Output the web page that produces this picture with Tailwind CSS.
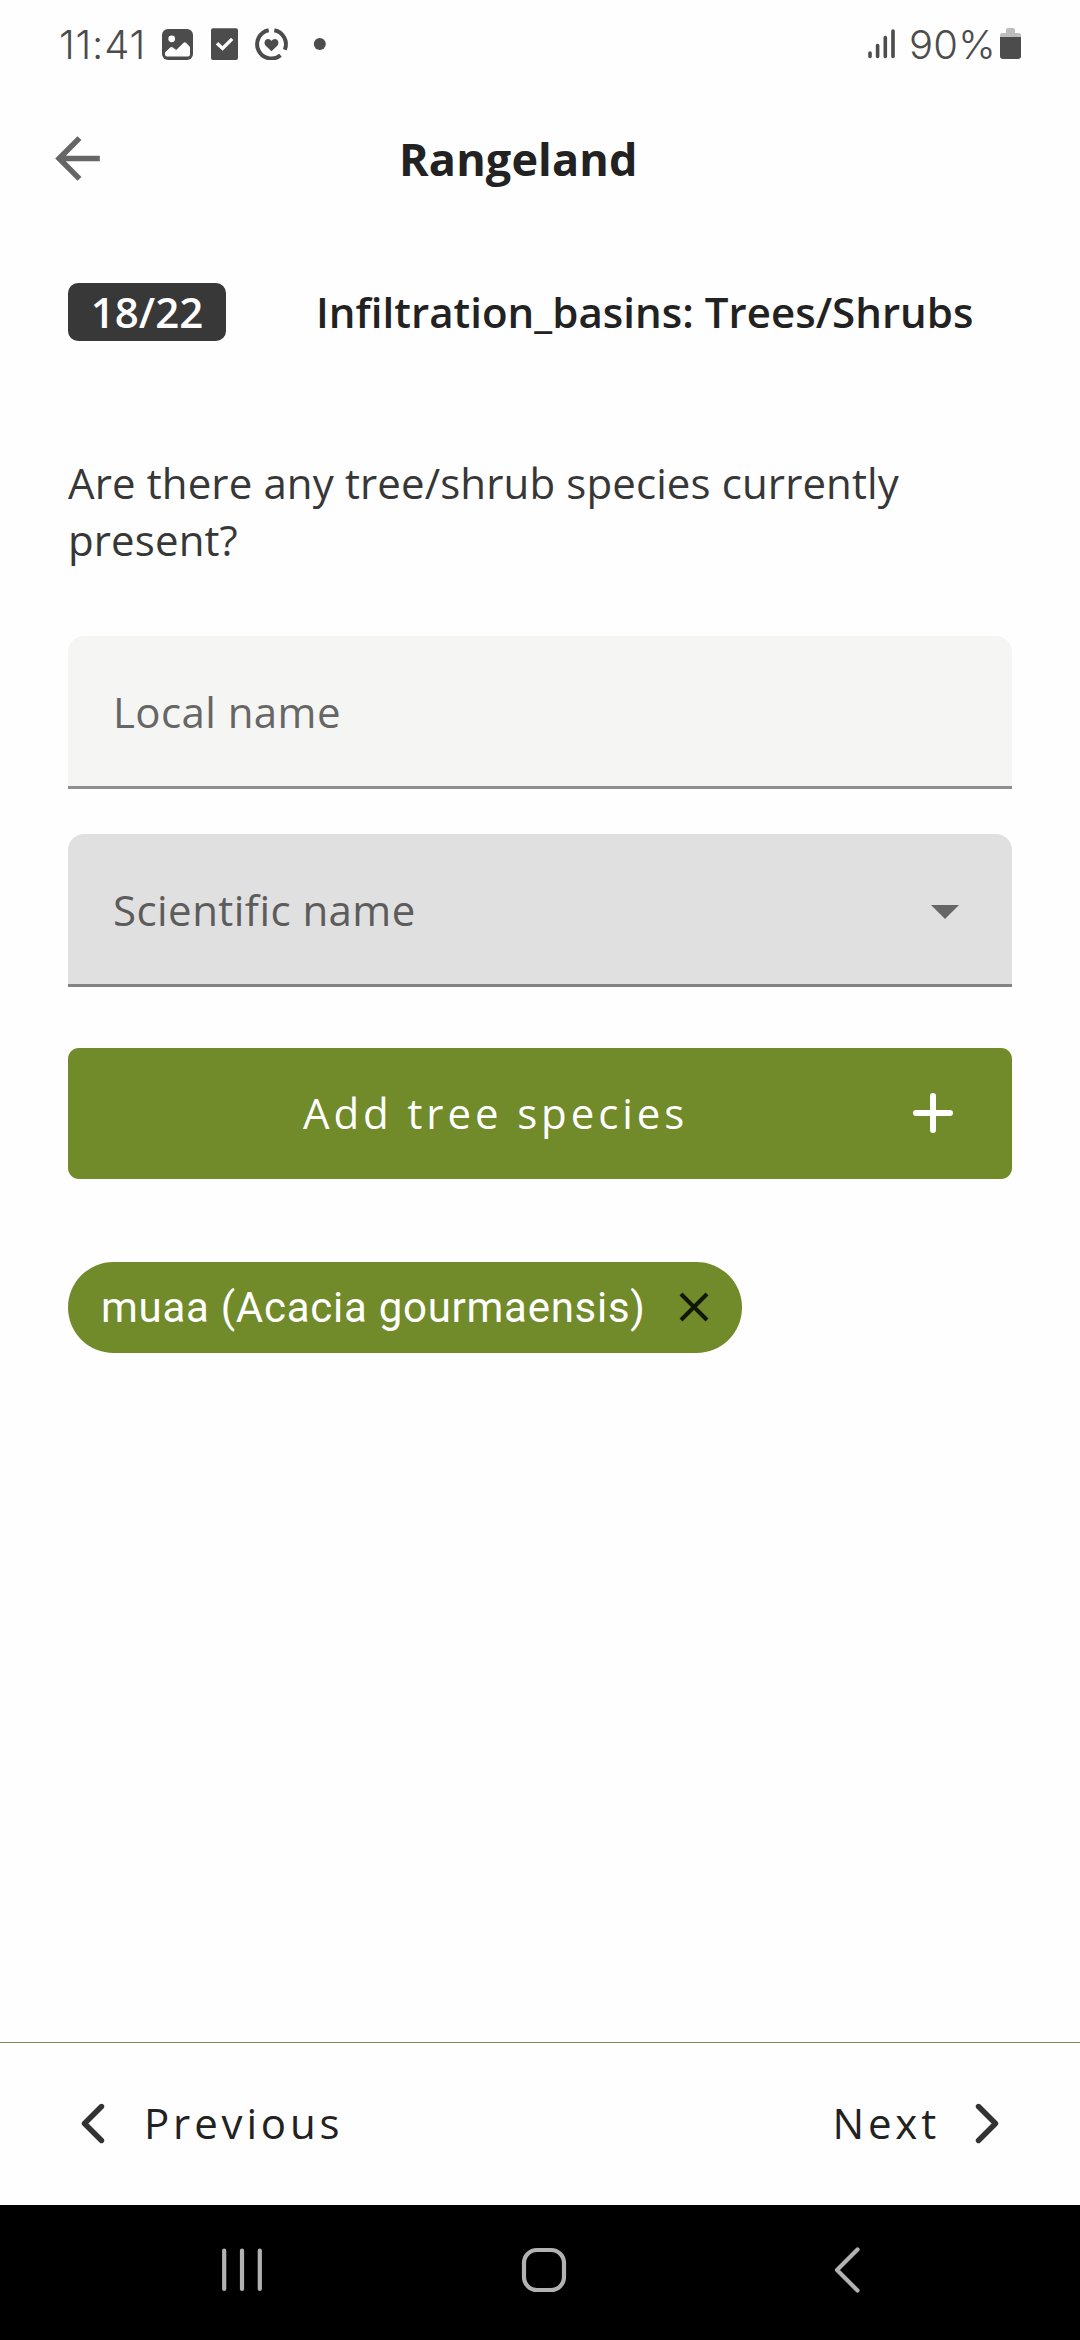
<!DOCTYPE html>
<html lang="en">
<head>
<meta charset="utf-8">
<title>Rangeland</title>
<script src="https://cdn.jsdelivr.net/npm/@tailwindcss/browser@4"></script>
</head>
<body class="bg-white">
<div class="flex h-[2340px] w-[1080px] flex-col overflow-hidden bg-[#fefefe] font-['Open_Sans',sans-serif] text-[42px] leading-[57px] text-[#222222]">

  <!-- Status bar -->
  <div class="flex h-[88px] items-center justify-between pr-[58px] pl-[59px] font-['Inter',sans-serif] text-[40px] font-[350] text-[#4c4c4c]">
    <div class="flex h-full items-center">
      <span class="w-[103px] tracking-[0.8px]">11:41</span>
      <svg class="h-8 w-[170px]" viewBox="162 28 170 32" fill="#4c4c4c">
        <rect x="162" y="29" width="31" height="31" rx="6"/>
        <circle cx="171.7" cy="38.8" r="3.4" fill="#fefefe"/>
        <path d="M165 52.5l5.2-5q1.400-1.200 2.800 0l3.200 2.500 7.400-7.200q1.200-1 2.400 0L190 47v7.500q0 2-2 2h-21q-2 0-2-2z" fill="#fefefe"/>
        <rect x="211" y="28.300" width="27" height="31.700" rx="2"/>
        <path d="M217 43.300l5.600 5.200 9.600-9.600" fill="none" stroke="#fefefe" stroke-width="3.400"/>
        <g fill="none" stroke="#4c4c4c" stroke-width="4">
          <path d="M268.700 30.200A14.300 14.300 0 1 0 280.500 55.300"/>
          <path d="M274.300 30.200A14.300 14.300 0 0 1 284.800 49.800"/>
        </g>
        <path d="M271.500 51.200l-5.800-5.500c-2.200-2.300-1-6.700 2.200-6.700 1.600 0 2.900.8 3.600 2 .7-1.200 2-2 3.600-2 3.200 0 4.400 4.400 2.200 6.700z"/>
        <circle cx="319.800" cy="44" r="6"/>
      </svg>
    </div>
    <div class="flex h-full items-center">
      <svg class="mr-[14px] h-8 w-[27px]" viewBox="868 28 27 32" fill="none" stroke="#4c4c4c" stroke-width="3.600" stroke-linecap="round">
        <path d="M870 53v3.500M877.600 45.500v11M885.300 37.500v19M893 31v25.500"/>
      </svg>
      <span class="w-[91px] tracking-[0.2px]">90%</span>
      <svg class="h-8 w-[22px]" viewBox="1000 28 22 32">
        <path d="M1006 33v-3q0-2 2-2h5q2 0 2 2v3h3.500q2.500 0 2.500 2.500V38h-21v-2.500q0-2.500 2.500-2.500z" fill="#bdbdbd"/>
        <path d="M1000 37h21v19q0 3-3 3h-15q-3 0-3-3z" fill="#4c4c4c"/>
      </svg>
    </div>
  </div>

  <!-- App bar -->
  <div class="flex h-[141px] items-center pl-11">
    <svg class="size-[67px]" viewBox="0 0 24 24" fill="#666666"><path d="M20 11H7.830l5.590-5.590L12 4l-8 8 8 8 1.410-1.410L7.830 13H20z"/></svg>
    <h1 class="ml-[288px] text-[45px] leading-[61px] font-bold tracking-[0.13px]">Rangeland</h1>
  </div>

  <main class="flex flex-1 flex-col px-[68px] pt-[54px]">
    <div class="flex h-[58px] items-center font-semibold">
      <div class="flex h-[58px] w-[158px] items-center justify-center rounded-[10px] bg-[#383838] pb-[2px] text-white">18/22</div>
      <h2 class="ml-[90px] pb-[2px] tracking-[0.04px] whitespace-nowrap">Infiltration_basins: Trees/Shrubs</h2>
    </div>

    <p class="mt-[113px] tracking-[0.120px] text-[#373737]">Are there any tree/shrub species currently<br>present?</p>

    <div class="mt-[68px] flex h-[153px] items-center rounded-t-[16px] border-b-3 border-[#8e8e8e] bg-[#f5f5f3] px-[45px] tracking-[0.42px] text-[#666666]">Local name</div>

    <div class="mt-[45px] flex h-[153px] items-center justify-between rounded-t-[16px] border-b-3 border-[#828282] bg-[#e0e0e0] pr-[53px] pl-[45px] tracking-[0.45px] text-[#5c5c5c]">
      <span>Scientific name</span>
      <svg class="mt-[6px] h-[14px] w-7" viewBox="0 0 28 14" fill="#666666"><path d="M0 0h28L14 14z"/></svg>
    </div>

    <button class="mt-[61px] flex h-[131px] items-center rounded-[11px] bg-[#718a2a] pr-[59px] pl-[235px] text-white">
      <span class="pb-[2px] tracking-[3.900px]">Add tree species</span>
      <svg class="mb-[2px] ml-auto size-10" viewBox="0 0 40 40" fill="none" stroke="#fff" stroke-width="6" stroke-linecap="round"><path d="M3 20h34M20 3v34"/></svg>
    </button>

    <div class="mt-[83px] flex h-[91px] w-[674px] items-center justify-between rounded-full bg-[#718a2a] pr-[33px] pl-[33px] font-['Roboto',sans-serif] text-white">
      <span class="tracking-[0.730px]">muaa (Acacia gourmaensis)</span>
      <svg class="mb-px size-[30px]" viewBox="0 0 30 30" fill="none" stroke="#121800" stroke-width="4"><path d="M2 2l26 26M28 2L2 28"/></svg>
    </div>
  </main>

  <!-- Pager -->
  <footer class="flex h-[163px] items-center justify-between border-t border-[#7b8a55] px-[81px] tracking-[3.850px]">
    <div class="flex items-center">
      <svg class="h-[42px] w-6" viewBox="0 0 24 42" fill="none" stroke="#333333" stroke-width="5.400" stroke-linecap="round" stroke-linejoin="round"><path d="M20.500 3.500L3.500 20.500l17 17"/></svg>
      <span class="ml-[39px] pb-[3px]">Previous</span>
    </div>
    <div class="flex items-center">
      <span class="mr-[35px] pb-[3px]">Next</span>
      <svg class="h-[42px] w-6" viewBox="0 0 24 42" fill="none" stroke="#333333" stroke-width="5.400" stroke-linecap="round" stroke-linejoin="round"><path d="M3.500 3.500l17 17-17 17"/></svg>
    </div>
  </footer>

  <!-- System navigation -->
  <nav class="flex h-[135px] items-center bg-black pb-[5px] pl-[221px]">
    <svg class="h-12 w-[642px]" viewBox="221 2246 642 48" fill="none" stroke="#b2b2b2" stroke-width="4.200" stroke-linecap="round" stroke-linejoin="round">
      <path d="M224.200 2250.500v38.500M242 2250.500v38.500M259.800 2250.500v38.500"/>
      <rect x="524" y="2250" width="40" height="40" rx="13"/>
      <path d="M857.500 2249.500l-20.500 20.500 20.500 20.500"/>
    </svg>
  </nav>
</div>
</body>
</html>
